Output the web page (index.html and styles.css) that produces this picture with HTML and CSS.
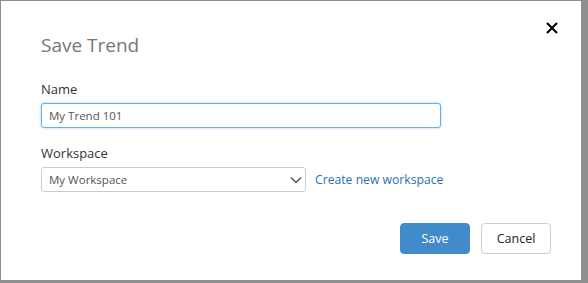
FILE: index.html
```html
<!DOCTYPE html>
<html lang="en">
<head>
  <meta charset="UTF-8">
  <title>Save Trend</title>
  <link rel="stylesheet" href="styles.css">
</head>
<body>

<!-- dialog -->
<div class="dialog">
  <div class="dialog-header">
    <h1 class="title">Save Trend</h1>
    <button class="close" aria-label="Close">
      <svg width="12" height="12" viewBox="0 0 12 12">
        <path d="M1 1 L11 11 M11 1 L1 11" stroke="#000" stroke-width="2" fill="none"/>
      </svg>
    </button>
  </div>

  <div class="field">
    <label class="label">Name</label>
    <input class="text-input" type="text" value="My Trend 101">
  </div>

  <div class="field">
    <label class="label">Workspace</label>
    <div class="row">
      <div class="select">
        <span>My Workspace</span>
        <svg width="12" height="8" viewBox="0 0 12 8">
          <path d="M1 1.5 L6 6.5 L11 1.5" stroke="#555" stroke-width="1.5" fill="none"/>
        </svg>
      </div>
      <a href="#" class="link">Create new workspace</a>
    </div>
  </div>

  <div class="footer">
    <button class="btn btn-primary">Save</button>
    <button class="btn btn-default">Cancel</button>
  </div>
</div>

</body>
</html>
```

FILE: styles.css
```css
/* page behind the dialog */
body {
  margin: 0;
  background: #8e8e8e;
  font-family: "Open Sans", "Noto Sans", sans-serif;
  height: 283px;
  overflow: hidden;
}

.dialog {
  margin: 1px 0 0 1px;
  width: 580px;
  height: 279px;
  background: #fff;
  box-sizing: border-box;
  padding: 0 0 0 40px;
}

.dialog-header {
  display: flex;
  justify-content: space-between;
  align-items: flex-start;
  height: 79px;
}
.title {
  margin: 31px 0 0;
  font-size: 19px;
  font-weight: normal;
  color: #777;
  line-height: 26px;
}
.close {
  margin: 21px 23px 0 0;
  padding: 0;
  border: 0;
  background: none;
  width: 12px;
  height: 12px;
}
.close svg {
  display: block;
}

/* form */
.field {
  margin-bottom: 16px;
}
.label {
  display: block;
  font-size: 13px;
  color: #333;
  line-height: 18px;
  margin-bottom: 5px;
}
.text-input {
  display: block;
  box-sizing: border-box;
  width: 400px;
  height: 25px;
  padding: 0 7px;
  border: 1px solid #66afe9;
  border-radius: 3px;
  box-shadow: 0 0 3px rgba(102, 175, 233, 0.6);
  font-family: inherit;
  font-size: 11.5px;
  color: #555;
  outline: none;
}

.row {
  display: flex;
  align-items: center;
}
.select {
  box-sizing: border-box;
  width: 265px;
  height: 25px;
  border: 1px solid #ccc;
  border-radius: 3px;
  display: flex;
  align-items: center;
  justify-content: space-between;
  padding: 0 3px 0 7px;
  font-size: 11.5px;
  color: #555;
}
.link {
  margin-left: 9px;
  font-size: 12.2px;
  color: #2a72b5;
  text-decoration: none;
}

/* buttons */
.footer {
  display: flex;
  justify-content: flex-end;
  gap: 11px;
  padding-right: 30px;
  margin-top: 31px;
}
.btn {
  width: 70px;
  height: 31px;
  border-radius: 4px;
  font-family: inherit;
  font-size: 12.5px;
}
.btn-primary {
  background: #428bca;
  border: 1px solid #428bca;
  color: #fff;
}
.btn-default {
  background: #fff;
  border: 1px solid #ccc;
  color: #222;
}
```
